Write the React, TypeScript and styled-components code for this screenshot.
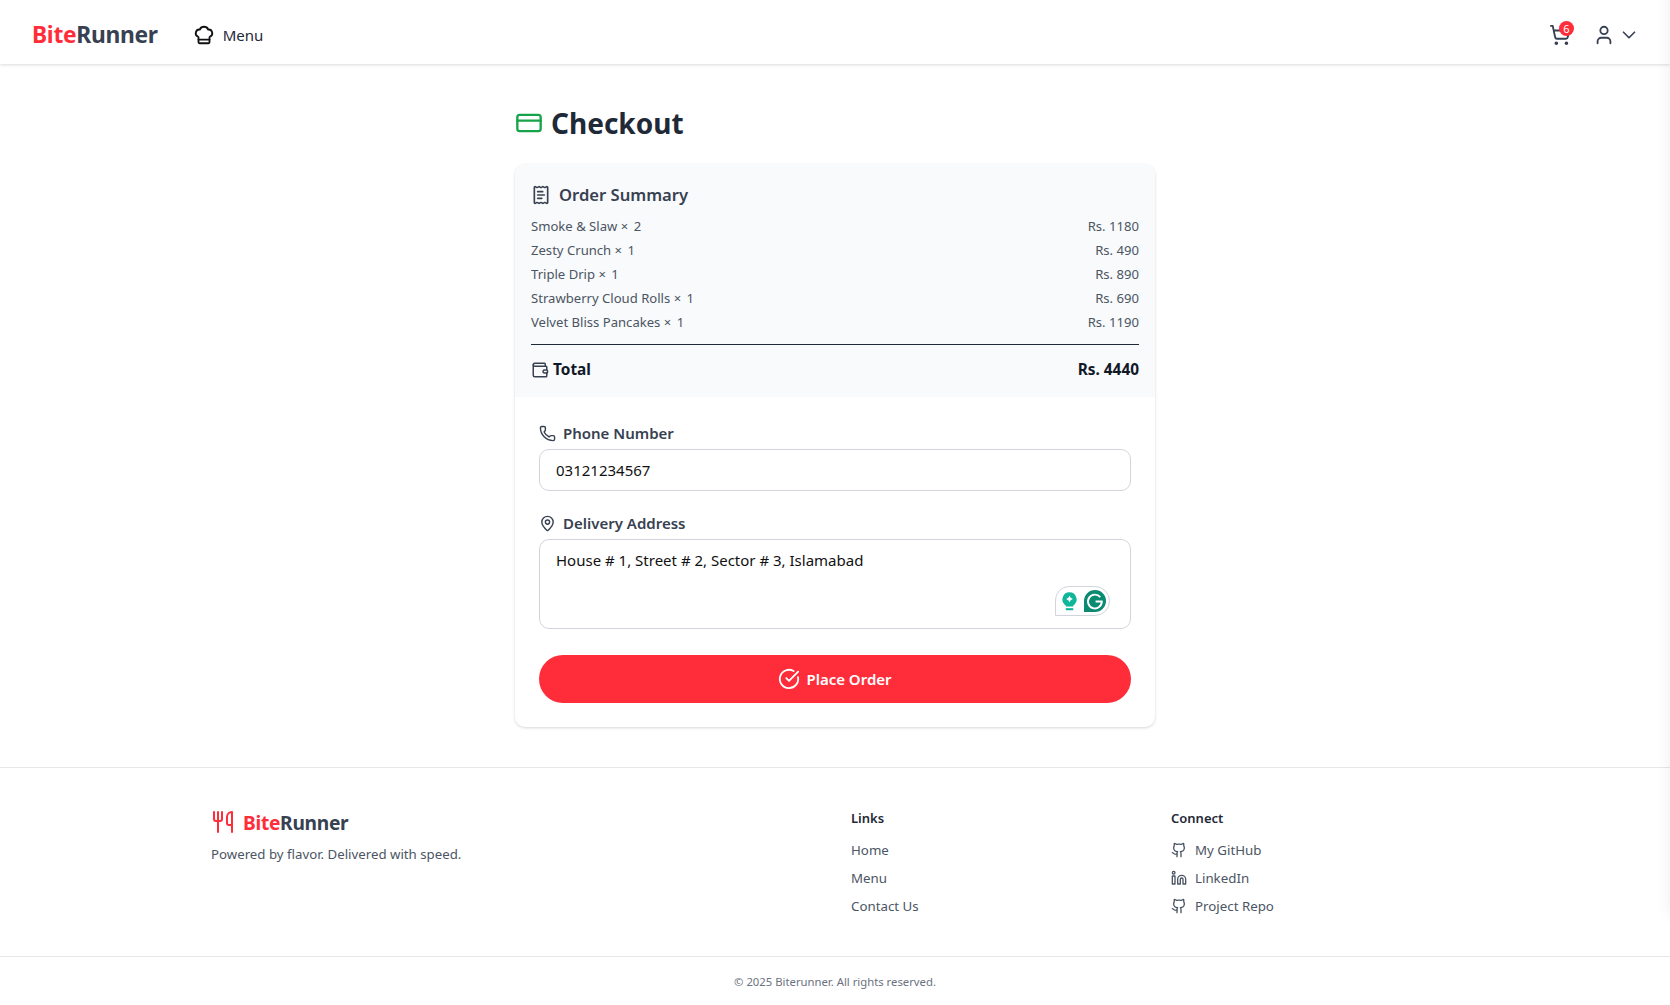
import React from 'react';
import styled, { createGlobalStyle } from 'styled-components';
import {
  ChefHat,
  ChevronDown,
  CircleCheckBig,
  CreditCard,
  Github,
  Linkedin,
  MapPin,
  Phone,
  ReceiptText,
  ShoppingCart,
  User,
  Utensils,
  Wallet,
} from 'lucide-react';

const GlobalStyle = createGlobalStyle`
  * { box-sizing: border-box; }
  html, body { margin: 0; padding: 0; background: #fff; }
  body { font-family: "Noto Sans", "Open Sans", sans-serif; color: #1f2937; }
`;

const Page = styled.div`
  display: flex;
  flex-direction: column;
  min-height: 1005px;
`;

/* closed side drawer: only its shadow shows along the right edge */
const DrawerShadow = styled.div`
  position: fixed;
  left: 100%;
  top: -40px;
  width: 40px;
  height: 955px;
  box-shadow: 0 0 16px rgba(0, 0, 0, 0.07);
`;

const Navbar = styled.header`
  height: 64px;
  padding: 5px 30px 0 32px;
  display: flex;
  align-items: center;
  justify-content: space-between;
  background: #fff;
  box-shadow: 0 1px 3px rgba(0, 0, 0, 0.15);
`;

const NavLeft = styled.div`
  display: flex;
  align-items: center;
  gap: 35px;
`;

const Brand = styled.div<{ $size: number }>`
  font-size: ${(p) => p.$size}px;
  font-weight: 700;
  color: #374151;
  letter-spacing: -0.3px;
  span { color: #ff2d3a; }
`;

const MenuLink = styled.div`
  display: flex;
  align-items: center;
  gap: 8px;
  font-size: 15px;
  color: #1f2937;
  svg { color: #111; }
`;

const NavRight = styled.div`
  display: flex;
  align-items: center;
  gap: 22px;
  color: #374151;
`;

const CartWrap = styled.div`
  position: relative;
  display: flex;
`;

const Badge = styled.span`
  position: absolute;
  top: -3px;
  right: -3px;
  width: 15px;
  height: 15px;
  border-radius: 50%;
  background: #ff2d3a;
  color: #fff;
  font-size: 11px;
  line-height: 15px;
  text-align: center;
`;

const UserMenu = styled.div`
  display: flex;
  align-items: center;
  gap: 3px;
`;

const Main = styled.main`
  width: 640px;
  margin: 0 auto;
  padding: 32px 0 40px;
`;

const Title = styled.h1`
  margin: 0 0 14px;
  display: flex;
  align-items: center;
  gap: 8px;
  font-size: 28px;
  line-height: 54px;
  font-weight: 700;
  color: #1f2937;
  svg { color: #16a34a; }
`;

const Card = styled.section`
  border-radius: 10px;
  background: #fff;
  box-shadow: 0 1px 3px rgba(0, 0, 0, 0.16);
  overflow: hidden;
`;

const Summary = styled.div`
  background: #f9fafb;
  padding: 18px 16px 16px;
  height: 233px;
`;

const SummaryTitle = styled.h2`
  margin: 0 0 6px;
  display: flex;
  align-items: center;
  gap: 8px;
  font-size: 16.6px;
  line-height: 26px;
  font-weight: 600;
  color: #374151;
`;

const Row = styled.div`
  display: flex;
  justify-content: space-between;
  font-size: 13.1px;
  line-height: 24px;
  color: #4b5563;
`;

const Qty = styled.span`
  word-spacing: 2px;
`;

const TotalRow = styled.div`
  margin-top: 10px;
  border-top: 1px solid #1f2937;
  padding-top: 13px;
  display: flex;
  justify-content: space-between;
  align-items: center;
  font-size: 15.4px;
  line-height: 24px;
  font-weight: 700;
  color: #111827;
`;

const TotalLabel = styled.span`
  display: flex;
  align-items: center;
  gap: 4px;
  svg { color: #374151; }
`;

const Form = styled.form`
  padding: 24px;
  display: flex;
  flex-direction: column;
`;

const Label = styled.label`
  margin-bottom: 4px;
  display: flex;
  align-items: center;
  gap: 7px;
  font-size: 15px;
  line-height: 24px;
  font-weight: 600;
  color: #374151;
`;

const Input = styled.input`
  width: 100%;
  height: 42px;
  margin-bottom: 20px;
  padding: 0 16px;
  border: 1px solid #d1d5db;
  border-radius: 10px;
  font: inherit;
  font-size: 15px;
  color: #111;
  outline: none;
`;

const AreaWrap = styled.div`
  position: relative;
  margin-bottom: 26px;
  display: flex;
`;

const Area = styled.textarea`
  width: 100%;
  height: 90px;
  padding: 8px 16px;
  border: 1px solid #d1d5db;
  border-radius: 10px;
  font: inherit;
  font-size: 15px;
  line-height: 24px;
  color: #111;
  resize: none;
  outline: none;
`;

const Grammarly = styled.div`
  position: absolute;
  right: 21px;
  bottom: 13px;
  width: 55px;
  height: 30px;
  display: flex;
  align-items: center;
  justify-content: space-between;
  padding: 0 3px 0 6px;
  border: 1px solid #d1d5db;
  border-radius: 14px 15px 15px 0;
  background: #fff;
`;

const PlaceOrder = styled.button`
  height: 48px;
  border: none;
  border-radius: 24px;
  background: #ff2d3a;
  color: #fff;
  display: flex;
  align-items: center;
  justify-content: center;
  gap: 6px;
  font: inherit;
  font-size: 15px;
  font-weight: 600;
`;

const Footer = styled.footer`
  border-top: 1px solid #e5e7eb;
`;

const FooterGrid = styled.div`
  width: 1248px;
  margin: 0 auto;
  padding: 40px 0 40px;
  display: grid;
  grid-template-columns: repeat(4, 1fr);
  column-gap: 32px;
`;

const FooterBrand = styled.div`
  grid-column: span 2;
`;

const FooterLogo = styled.div`
  display: flex;
  align-items: center;
  gap: 8px;
  height: 28px;
  svg { color: #ff2d3a; }
`;

const Tagline = styled.p`
  margin: 8px 0 0;
  font-size: 13.25px;
  line-height: 20px;
  color: #4b5563;
`;

const ColTitle = styled.h3`
  margin: 0 0 12px;
  font-size: 13px;
  line-height: 20px;
  font-weight: 600;
  color: #1f2937;
`;

const LinkList = styled.div`
  display: flex;
  flex-direction: column;
  gap: 8px;
`;

const FooterLink = styled.a`
  display: flex;
  align-items: center;
  gap: 8px;
  font-size: 13.3px;
  line-height: 20px;
  color: #4b5563;
`;

const Copyright = styled.div`
  border-top: 1px solid #e5e7eb;
  padding: 17px 0 15px;
  text-align: center;
  font-size: 11.3px;
  line-height: 16px;
  color: #6b7280;
`;

const items = [
  ['Smoke & Slaw', 2, 'Rs. 1180'],
  ['Zesty Crunch', 1, 'Rs. 490'],
  ['Triple Drip', 1, 'Rs. 890'],
  ['Strawberry Cloud Rolls', 1, 'Rs. 690'],
  ['Velvet Bliss Pancakes', 1, 'Rs. 1190'],
];

const GrammarlyMarks = () => (
  <>
    <svg width="15" height="19" viewBox="0 0 18 22">
      <path d="M9 0a8.5 8.5 0 0 0-4.5 15.7V17h9v-1.3A8.5 8.5 0 0 0 9 0z" fill="#10b59a" />
      <path d="M9 4l1.4 2.6L13 8l-2.6 1.4L9 12 7.6 9.4 5 8l2.6-1.4z" fill="#fff" />
      <rect x="4.5" y="19" width="9" height="2.5" fill="#10b59a" />
    </svg>
    <svg width="22" height="22" viewBox="0 0 23 23">
      <path d="M11.5 0a11.5 11.5 0 1 1 0 23H0V11.5A11.5 11.5 0 0 1 11.5 0z" fill="#0b8a72" />
      <path d="M17 7.5a7.2 7.2 0 1 0 1.6 4.5h-6.5" fill="none" stroke="#fff" strokeWidth="2" />
    </svg>
  </>
);

export default function App() {
  return (
    <Page>
      <GlobalStyle />
      <DrawerShadow />
      <Navbar>
        <NavLeft>
          <Brand $size={22.8}><span>Bite</span>Runner</Brand>
          <MenuLink><ChefHat size={22} />Menu</MenuLink>
        </NavLeft>
        <NavRight>
          <CartWrap>
            <ShoppingCart size={22} />
            <Badge>6</Badge>
          </CartWrap>
          <UserMenu>
            <User size={22} />
            <ChevronDown size={22} strokeWidth={1.8} />
          </UserMenu>
        </NavRight>
      </Navbar>

      <Main>
        <Title><CreditCard size={28} />Checkout</Title>
        <Card>
          <Summary>
            <SummaryTitle><ReceiptText size={20} />Order Summary</SummaryTitle>
            {items.map(([name, qty, price]) => (
              <Row key={name}>
                <span>{name} <Qty>× {qty}</Qty></span>
                <span>{price}</span>
              </Row>
            ))}
            <TotalRow>
              <TotalLabel><Wallet size={18} />Total</TotalLabel>
              <span>Rs. 4440</span>
            </TotalRow>
          </Summary>
          <Form>
            <Label><Phone size={17} />Phone Number</Label>
            <Input readOnly value="03121234567" />
            <Label><MapPin size={17} />Delivery Address</Label>
            <AreaWrap>
              <Area readOnly value="House # 1, Street # 2, Sector # 3, Islamabad" />
              <Grammarly><GrammarlyMarks /></Grammarly>
            </AreaWrap>
            <PlaceOrder type="button"><CircleCheckBig size={22} />Place Order</PlaceOrder>
          </Form>
        </Card>
      </Main>

      <Footer>
        <FooterGrid>
          <FooterBrand>
            <FooterLogo>
              <Utensils size={24} />
              <Brand $size={19.2}><span>Bite</span>Runner</Brand>
            </FooterLogo>
            <Tagline>Powered by flavor. Delivered with speed.</Tagline>
          </FooterBrand>
          <div>
            <ColTitle>Links</ColTitle>
            <LinkList>
              <FooterLink>Home</FooterLink>
              <FooterLink>Menu</FooterLink>
              <FooterLink>Contact Us</FooterLink>
            </LinkList>
          </div>
          <div>
            <ColTitle>Connect</ColTitle>
            <LinkList>
              <FooterLink><Github size={16} />My GitHub</FooterLink>
              <FooterLink><Linkedin size={16} />LinkedIn</FooterLink>
              <FooterLink><Github size={16} />Project Repo</FooterLink>
            </LinkList>
          </div>
        </FooterGrid>
        <Copyright>© 2025 Biterunner. All rights reserved.</Copyright>
      </Footer>
    </Page>
  );
}
